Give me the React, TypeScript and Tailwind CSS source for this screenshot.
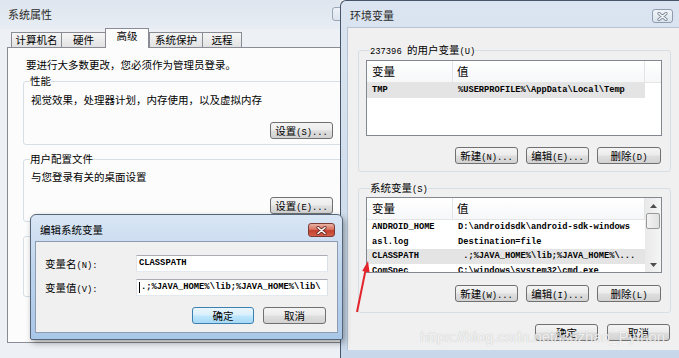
import React from "react";

const F_CJK = "font-['Noto_Sans_CJK_SC',sans-serif]";
const F_MONO = "font-['Liberation_Mono',monospace]";
const CJK_SPLIT = /[\u2E80-\u9FFF\uFF00-\uFFEF\u3000-\u303F]+|[^\u2E80-\u9FFF\uFF00-\uFFEF\u3000-\u303F]+/g;
const CJK_TEST = /[\u2E80-\u9FFF\uFF00-\uFFEF\u3000-\u303F]/;

function MT({ s, big = "text-[10.5px]", small = "text-[8.8px]" }: { s: string; big?: string; small?: string }) {
  const parts = s.match(CJK_SPLIT) ?? [];
  return (
    <span className="flex h-[12px] items-baseline whitespace-pre leading-[12px]">
      {parts.map((p, i) =>
        CJK_TEST.test(p) ? (
          <span key={i} className={`${F_CJK} ${big} leading-[12px]`}>
            {p}
          </span>
        ) : (
          <span key={i} className={`${F_MONO} ${small} leading-[12px]`}>
            {p}
          </span>
        )
      )}
    </span>
  );
}

function Btn({ label, w, focus = false }: { label: string; w: string; focus?: boolean }) {
  return (
    <div
      className={`${w} flex h-[17px] shrink-0 items-center justify-center rounded-[3px] border text-black ${
        focus
          ? "border-[#3c7fb1] bg-[linear-gradient(to_bottom,#eaf6fd_0%,#d9f0fc_45%,#bee6fd_55%,#a7d9f5_100%)]"
          : "border-[#707070] bg-[linear-gradient(to_bottom,#f4f4f4_0%,#ececec_45%,#dedede_55%,#d2d2d2_100%)]"
      }`}
    >
      <MT s={label} />
    </div>
  );
}

function Tab({ w, label, last = false }: { w: string; label: string; last?: boolean }) {
  return (
    <div
      className={`${w} flex h-[15px] items-center justify-center border-l border-t border-[#898c95] bg-[linear-gradient(to_bottom,#f5f5f5,#e2e2e2)] ${
        last ? "border-r" : ""
      }`}
    >
      <MT s={label} />
    </div>
  );
}

function LeftWindow() {
  return (
    <div className="flex h-[358px] w-[340px] shrink-0 flex-col overflow-hidden bg-[#edf1f6]">
      <div className="flex h-[29px] shrink-0 items-start bg-[linear-gradient(to_bottom,#dde5ee,#e8edf4)] pl-[8px] pt-[8px]">
        <span className={`${F_CJK} text-[11px] leading-[13px] text-[#2a2a2a]`}>系统属性</span>
        <div className="-mr-[14px] ml-auto mt-[-1px] h-[14px] w-[22px] rounded-[3px] border border-[#9aa6b6] bg-[linear-gradient(to_bottom,#eef2f7,#dce4ee)]" />
      </div>
      <div className="relative z-10 flex h-[18px] shrink-0 items-end pl-[11px]">
        <Tab w="w-[50px]" label="计算机名" />
        <Tab w="w-[44px]" label="硬件" />
        <div className="-mb-px flex h-[20px] w-[44px] items-start justify-center border border-b-0 border-[#898c95] bg-[#fcfcfc] pt-[1px]">
          <MT s="高级" />
        </div>
        <Tab w="w-[53px]" label="系统保护" />
        <Tab w="w-[40px]" label="远程" last />
      </div>
      <div className="ml-[7px] h-[296px] w-[345px] shrink-0 border border-[#898c95] bg-[#fcfcfc] pl-[15px] pt-[11px]">
        <div className="pl-[3px]">
          <MT s="要进行大多数更改，您必须作为管理员登录。" />
        </div>
        <fieldset className="mt-[4px] w-[320px] rounded-[3px] border border-[#d5dfe5] pb-[5px] pl-[7px] pr-[9px]">
          <legend className="-ml-[1px] px-0">
            <MT s="性能" />
          </legend>
          <div className="mt-[7px]">
            <MT s="视觉效果，处理器计划，内存使用，以及虚拟内存" />
          </div>
          <div className="mt-[16px] flex justify-end">
            <Btn w="w-[63px]" label="设置(S)..." />
          </div>
        </fieldset>
        <fieldset className="mt-[8px] w-[320px] rounded-[3px] border border-[#d5dfe5] pb-[7px] pl-[7px] pr-[9px]">
          <legend className="-ml-[1px] px-0">
            <MT s="用户配置文件" />
          </legend>
          <div className="mt-[6px]">
            <MT s="与您登录有关的桌面设置" />
          </div>
          <div className="mt-[14px] flex justify-end">
            <Btn w="w-[63px]" label="设置(E)..." />
          </div>
        </fieldset>
        <fieldset className="mt-[14px] h-[61px] w-[320px] rounded-[3px] border border-[#d5dfe5]" />
      </div>
    </div>
  );
}

function CloseX({ stroke, fill }: { stroke: string; fill: string }) {
  return (
    <svg width="11" height="9" viewBox="0 0 11 9">
      <path d="M2 1.5 L9 7.5 M9 1.5 L2 7.5" stroke={stroke} strokeWidth="3.2" strokeLinecap="round" fill="none" />
      <path d="M2 1.5 L9 7.5 M9 1.5 L2 7.5" stroke={fill} strokeWidth="1.6" strokeLinecap="round" fill="none" />
    </svg>
  );
}

function EditDialog() {
  return (
    <div className="absolute left-[30px] top-[214px] z-20 flex h-[126px] w-[313px] flex-col rounded-b-[2px] rounded-t-[6px] border border-[#55657a] bg-[linear-gradient(to_bottom,#d9e6f4,#c0d6ee_40%,#a9c7e8)] px-[4px] pb-[6px] shadow-[2px_3px_6px_rgba(0,0,0,0.35)]">
      <div className="flex h-[26px] shrink-0 items-start pl-[5px] pt-[9px]">
        <MT s="编辑系统变量" />
        <div className="ml-auto mr-[3px] mt-[-1px] flex h-[14px] w-[27px] items-center justify-center rounded-[3px] border border-[#7d3b35] bg-[linear-gradient(to_bottom,#eab3a6,#d8735f_45%,#c4412f_55%,#d2604a)]">
          <CloseX stroke="#6b2a22" fill="#ffffff" />
        </div>
      </div>
      <div className="flex flex-1 flex-col border border-[#8c9db3] bg-[#f0f0f0] pl-[9px] pr-[9px] pt-[13px]">
        <div className="flex h-[17px] items-center">
          <div className="w-[91px]">
            <MT s="变量名(N):" />
          </div>
          <div className="flex h-[17px] w-[192px] items-center border border-[#abadb3] border-b-[#e3e9ef] border-l-[#e2e3ea] border-r-[#dbdfe6] bg-white pl-[2px]">
            <span className={`${F_MONO} text-[8.8px] font-bold leading-none`}>CLASSPATH</span>
          </div>
        </div>
        <div className="mt-[7px] flex h-[17px] items-center">
          <div className="w-[91px]">
            <MT s="变量值(V):" />
          </div>
          <div className="flex h-[17px] w-[192px] items-center overflow-hidden whitespace-nowrap border border-[#abadb3] border-b-[#e3e9ef] border-l-[#e2e3ea] border-r-[#dbdfe6] bg-white pl-[2px]">
            <span className="mr-[1px] h-[11px] w-px shrink-0 bg-black" />
            <span className={`${F_MONO} text-[8.8px] font-bold leading-none`}>.;%JAVA_HOME%\lib;%JAVA_HOME%\lib\</span>
          </div>
        </div>
        <div className="mt-[11px] flex justify-end gap-[9px] pr-[2px]">
          <Btn w="w-[62px]" label="确定" focus />
          <Btn w="w-[63px]" label="取消" />
        </div>
      </div>
    </div>
  );
}

type Row = { k: string; v: string; sel?: boolean };

function ListBox({ rows, scroll = false }: { rows: Row[]; scroll?: boolean }) {
  return (
    <div className="flex h-[76px] w-[296px] overflow-hidden border border-[#828790] bg-white">
      <div className="flex min-w-0 flex-1 flex-col">
        <div className="flex h-[22px] shrink-0 border-b border-[#e5e5e5] bg-[linear-gradient(to_bottom,#ffffff,#f6f7f9)]">
          <div className="flex w-[86px] shrink-0 items-center border-r border-[#e3e4e6] pl-[5px]">
            <span className={`${F_CJK} text-[11.5px] leading-[13px]`}>变量</span>
          </div>
          <div className="flex w-[192px] shrink-0 items-center border-r border-[#e3e4e6] pl-[4px]">
            <span className={`${F_CJK} text-[11.5px] leading-[13px]`}>值</span>
          </div>
          <div className="flex-1" />
        </div>
        {rows.map((r) => (
          <div key={r.k} className="flex h-[14.6px] shrink-0 items-center">
            <div className={`flex h-full w-[278px] shrink-0 items-center ${r.sel ? "bg-[#e4e4e4]" : ""}`}>
              <span className={`${F_MONO} w-[86px] shrink-0 pl-[5px] text-[8.7px] font-bold leading-none`}>{r.k}</span>
              <span className={`${F_MONO} whitespace-pre pl-[5px] text-[8.7px] font-bold leading-none`}>{r.v}</span>
            </div>
          </div>
        ))}
      </div>
      {scroll && (
        <div className="flex w-[16px] shrink-0 flex-col bg-[linear-gradient(to_right,#e9e9e9,#f5f5f5)]">
          <div className="flex h-[15px] shrink-0 items-center justify-center">
            <svg width="7" height="4" viewBox="0 0 7 4">
              <path d="M0 4 L3.5 0 L7 4 Z" fill="#4d4d4d" />
            </svg>
          </div>
          <div className="mx-[1px] h-[16px] shrink-0 rounded-[2px] border border-[#9a9a9a] bg-[linear-gradient(to_right,#f3f3f3,#e1e1e1)]" />
          <div className="flex-1" />
          <div className="flex h-[15px] shrink-0 items-center justify-center">
            <svg width="7" height="4" viewBox="0 0 7 4">
              <path d="M0 0 L3.5 4 L7 0 Z" fill="#4d4d4d" />
            </svg>
          </div>
        </div>
      )}
    </div>
  );
}

function RightWindow() {
  return (
    <div className="flex h-[358px] min-w-0 flex-1 flex-col rounded-tl-[6px] border-l border-t border-[#46556a] bg-[linear-gradient(to_bottom,#dbe5f1,#d2deec_50%,#c8d8ea)]">
      <div className="flex h-[26px] shrink-0 items-start pl-[9px] pt-[8px]">
        <span className={`${F_CJK} text-[11px] leading-[13px] text-[#2a2a2a]`}>环境变量</span>
        <div className="ml-auto mr-[6px] flex h-[14px] w-[21px] items-center justify-center rounded-[3px] border border-[#8e9cb0] bg-[linear-gradient(to_bottom,#f0f4f8,#d9e2ec)]">
          <CloseX stroke="#7b8797" fill="#f4f6f9" />
        </div>
      </div>
      <div className="mb-[8px] ml-[6px] flex flex-1 flex-col border-l border-t border-[#b6c4d6] bg-[#f0f0f0] pl-[10px] pt-[16px]">
        <fieldset className="w-[313px] rounded-[3px] border border-[#d5dfe5] pb-[7px] pl-[7px] pr-[8px]">
          <legend className="ml-[4px] px-0">
            <MT s="237396 的用户变量(U)" />
          </legend>
          <div className="mt-[4px]">
            <ListBox rows={[{ k: "TMP", v: "%USERPROFILE%\\AppData\\Local\\Temp", sel: true }]} />
          </div>
          <div className="mt-[11px] flex justify-end gap-[8px] pr-[1px]">
            <Btn w="w-[63px]" label="新建(N)..." />
            <Btn w="w-[63px]" label="编辑(E)..." />
            <Btn w="w-[64px]" label="删除(D)" />
          </div>
        </fieldset>
        <fieldset className="mt-[10px] w-[313px] rounded-[3px] border border-[#d5dfe5] pb-[10px] pl-[7px] pr-[8px]">
          <legend className="ml-[4px] px-0">
            <MT s="系统变量(S)" />
          </legend>
          <div className="mt-[3px]">
            <ListBox
              scroll
              rows={[
                { k: "ANDROID_HOME", v: "D:\\androidsdk\\android-sdk-windows" },
                { k: "asl.log", v: "Destination=file" },
                { k: "CLASSPATH", v: " .;%JAVA_HOME%\\lib;%JAVA_HOME%\\...", sel: true },
                { k: "ComSpec", v: "C:\\windows\\system32\\cmd.exe" },
              ]}
            />
          </div>
          <div className="mt-[12px] flex justify-end gap-[8px] pr-[1px]">
            <Btn w="w-[63px]" label="新建(W)..." />
            <Btn w="w-[63px]" label="编辑(I)..." />
            <Btn w="w-[64px]" label="删除(L)" />
          </div>
        </fieldset>
        <div className="mt-[11px] flex justify-end gap-[9px] pr-[9px]">
          <Btn w="w-[63px]" label="确定" />
          <Btn w="w-[63px]" label="取消" />
        </div>
      </div>
    </div>
  );
}

export default function App() {
  return (
    <div className="relative flex h-[358px] w-[679px] overflow-hidden bg-[#f0f0f0] text-[10.5px] leading-[12px] text-black">
      <LeftWindow />
      <RightWindow />
      <EditDialog />
      <svg className="pointer-events-none absolute left-0 top-0 z-30" width="679" height="358" viewBox="0 0 679 358">
        <line x1="357" y1="312" x2="366" y2="268" stroke="#e3242b" strokeWidth="2" />
        <polygon points="368,261 369.6,272.6 362.2,271" fill="#e3242b" />
      </svg>
      <div className="pointer-events-none absolute left-[420px] top-[328px] z-30 font-['Liberation_Sans',sans-serif] text-[15px] leading-[18px] text-[#f6f6f6] opacity-80 [text-shadow:0_0_1px_#a8a8a8]">
        https://blog.csdn.net/lsozhao_Python
      </div>
    </div>
  );
}
